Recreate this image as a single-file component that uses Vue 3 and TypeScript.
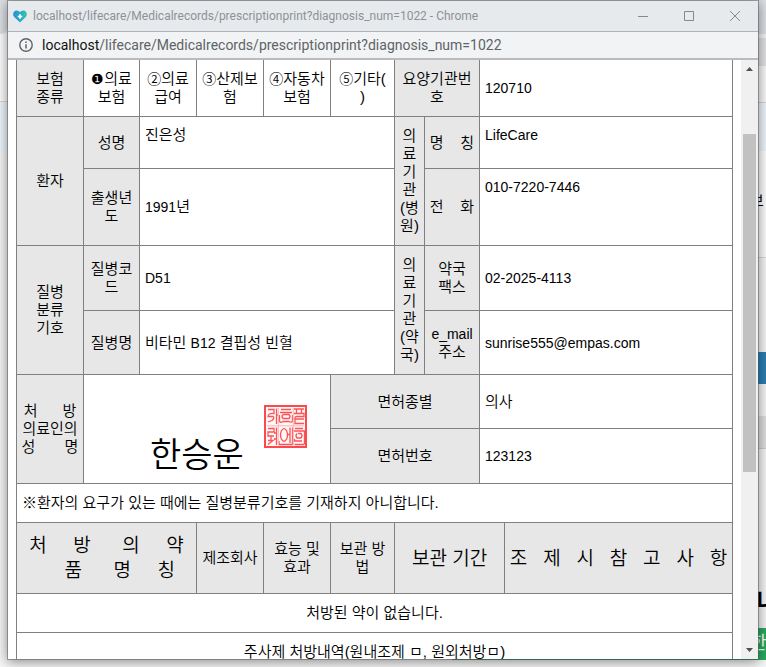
<script setup lang="ts">
interface Insurance {
  mark: string
  first: string
  second: string
}

const host = 'localhost'
const path = '/lifecare/Medicalrecords/prescriptionprint?diagnosis_num=1022'
const columns: string[] = ['c67', 'c56', 'c57', 'c67', 'c67', 'c64', 'c30', 'c55', 'c25', 'rest']
const insurances: Insurance[] = [
  { mark: '❶', first: '의료', second: '보험' },
  { mark: '②', first: '의료', second: '급여' },
  { mark: '③', first: '산제보', second: '험' },
  { mark: '④', first: '자동차', second: '보험' },
  { mark: '⑤', first: '기타(', second: ')' },
]
const hospital: string[] = ['의', '료', '기', '관', '(병', '원)']
const pharmacy: string[] = ['의', '료', '기', '관', '(약', '국)']

// Non-breaking gap used to spread the letters of a form label.
const gap = (n: number): string => '\u00a0'.repeat(n)
const drugName: string[] = [
  '처' + gap(5) + '방' + gap(6) + '의' + gap(5) + '약',
  gap(5) + '품' + gap(6) + '명' + gap(5) + '칭',
]
const notes = '조제시참고사항'.split('').join(gap(3))
</script>

<template>
  <div class="desktop">
    <div class="behind" aria-hidden="true">
      <i class="footer"></i>
      <div class="strip left">
        <i class="tab"></i><i class="bar"></i><i class="band"></i><i class="fill"></i>
      </div>
      <div class="strip right">
        <i class="tab"></i><i class="light"></i><i class="mid"></i><i class="pale"></i>
        <i class="band"></i><i class="card"><b>보</b></i><i class="space"></i>
        <i class="blue"></i><i class="space2"></i><i class="grey"></i>
        <i class="fill"><b>니</b></i><i class="green"><b>한</b></i><i class="foot"></i>
      </div>
    </div>

    <main class="window">
      <header class="title">
        <svg class="heart" viewBox="0 0 14 13" aria-hidden="true">
          <defs>
            <linearGradient id="heartFill" x1="0" y1="0" x2="1" y2="0">
              <stop offset="0" stop-color="#2f8fd0" />
              <stop offset=".5" stop-color="#27a9c9" />
              <stop offset="1" stop-color="#39c6a2" />
            </linearGradient>
          </defs>
          <path d="M7 12.6 1.2 7C-.6 5-.1 1.700 2.400.7 4.200 0 6 .8 7 2.300 8 .8 9.800 0 11.600.7 14.100 1.700 14.600 5 12.800 7Z" fill="url(#heartFill)" />
          <path d="M7 4.200V8.800M4.700 6.500H9.300" stroke="#fff" stroke-width="1.700" />
        </svg>
        <h1>{{ host + path }} - Chrome</h1>
        <nav class="controls">
          <button type="button" aria-label="최소화">
            <svg viewBox="0 0 10 10"><path d="M0 5.500H10" /></svg>
          </button>
          <button type="button" aria-label="최대화">
            <svg viewBox="0 0 10 10"><path d="M.5.5H9.500V9.500H.5Z" /></svg>
          </button>
          <button type="button" aria-label="닫기">
            <svg viewBox="0 0 10 10"><path d="M0 0 10 10M10 0 0 10" /></svg>
          </button>
        </nav>
      </header>

      <div class="address">
        <svg class="info" viewBox="0 0 14 14" aria-hidden="true">
          <circle cx="7" cy="7" r="6.200" fill="none" stroke="#5f6368" stroke-width="1.400" />
          <path d="M7 6.200V10.500M7 3.500V5" stroke="#5f6368" stroke-width="1.500" />
        </svg>
        <span class="url"><span class="host">{{ host }}</span>{{ path }}</span>
      </div>

      <div class="viewport">
        <div class="page">
          <table>
            <colgroup>
              <col v-for="(c, i) in columns" :key="i" :class="c" />
            </colgroup>
            <tbody>
              <tr class="h57">
                <th>보험<br />종류</th>
                <td v-for="(item, i) in insurances" :key="item.mark" class="center">
                  <span :class="i === 0 ? 'mark-on' : 'mark'">{{ item.mark }}</span>{{ item.first }}<br />{{ item.second }}
                </td>
                <th colspan="2">요양기관번<br />호</th>
                <td colspan="2" class="latin">120710</td>
              </tr>
              <tr class="h52">
                <th rowspan="2">환자</th>
                <th>성명</th>
                <td colspan="4" class="top">진은성</td>
                <th rowspan="2" class="tall"><span v-for="s in hospital" :key="s">{{ s }}</span></th>
                <th>명{{ gap(4) }}칭</th>
                <td colspan="2" class="latin top">LifeCare</td>
              </tr>
              <tr class="h77">
                <th>출생년<br />도</th>
                <td colspan="4"><span class="latin">1991</span>년</td>
                <th>전{{ gap(4) }}화</th>
                <td colspan="2" class="latin top">010-7220-7446</td>
              </tr>
              <tr class="h65">
                <th rowspan="2">질병<br />분류<br />기호</th>
                <th>질병코<br />드</th>
                <td colspan="4" class="latin">D51</td>
                <th rowspan="2" class="tall"><span v-for="s in pharmacy" :key="s">{{ s }}</span></th>
                <th>약국<br />팩스</th>
                <td colspan="2" class="latin">02-2025-4113</td>
              </tr>
              <tr class="h64">
                <th>질병명</th>
                <td colspan="4">비타민 <span class="latin">B12</span> 결핍성 빈혈</td>
                <th><span class="latin">e_mail</span><br />주소</th>
                <td colspan="2" class="latin">sunrise555@empas.com</td>
              </tr>
              <tr class="h54">
                <th rowspan="2">처{{ gap(6) }}방<br />의료인의<br />성{{ gap(7) }}명</th>
                <td colspan="4" rowspan="2">
                  <div class="sign">
                    <span>한승운</span>
                    <svg class="stamp" viewBox="0 0 43 43" role="img" aria-label="도장">
                      <rect x="1" y="1" width="41" height="41" fill="#fff6f6" stroke="#fb4a4e" stroke-width="2" />
                      <g fill="none" stroke="#fb5458" stroke-width="1.300">
                        <path d="M4 4.500H10V8.500Q4 8 4 11.500H9Q11 13 8 15.500L4 17M12.500 3.500V19M12.500 10H14" />
                        <path d="M17 4.500H27M16 7.500H28M19 9.500H25Q27 11.500 25 13.500H19Q17 11.500 19 9.500M15.500 10V16Q16 18.500 19 16.500H25Q28.500 18.500 28.500 15V10" />
                        <path d="M30 4H40M32.500 4V8M37.500 4V8M30 8.500H40V11.500H33Q30.500 11.500 31 14H40M31 14V18.500H40" />
                        <path d="M4 23.500H10V27H4V31H10M7 31V35M4 35.500H9L4 39.500M12.500 22.500V40M10 28H12.500M10 34H12.500" />
                        <path d="M20 23.500Q16.500 25 16.500 30T20 36.500Q23.500 35 23.500 30T20 23.500M26 22.500V38M23.500 29.500H26M15 36V39.500H28.500V22.500" />
                        <path d="M31 23.500H39M30 26H40.500V39.500M34 28.500H37Q39 30.500 37 33H33Q31 30.500 33 28.500M30.500 34V36H38M30.500 39.500H40" />
                      </g>
                      <path d="M14.300 3V40M29.300 3V40M3 20.800H40" stroke="#ffb3b5" stroke-width="1" />
                    </svg>
                  </div>
                </td>
                <th colspan="3">면허종별</th>
                <td colspan="2">의사</td>
              </tr>
              <tr class="h55">
                <th colspan="3">면허번호</th>
                <td colspan="2" class="latin">123123</td>
              </tr>
              <tr class="h39">
                <td colspan="10">※환자의 요구가 있는 때에는 질병분류기호를 기재하지 아니합니다.</td>
              </tr>
              <tr class="h71">
                <th colspan="3" class="big">{{ drugName[0] }}<br />{{ drugName[1] }}</th>
                <th>제조회사</th>
                <th>효능 및<br />효과</th>
                <th>보관 방<br />법</th>
                <th colspan="3" class="big">보관 기간</th>
                <th class="big">{{ notes }}</th>
              </tr>
              <tr class="h39">
                <td colspan="10" class="center">처방된 약이 없습니다.</td>
              </tr>
              <tr class="h39">
                <td colspan="10" class="center">주사제 처방내역(원내조제 ㅁ, 원외처방ㅁ)</td>
              </tr>
            </tbody>
          </table>
        </div>
        <div class="scrollbar" aria-hidden="true">
          <svg viewBox="0 0 17 17"><path d="M5 11 8.500 7 12 11Z" /></svg>
          <i class="before"></i><i class="thumb"></i><i class="after"></i>
          <svg viewBox="0 0 17 17"><path d="M5 6 8.500 10 12 6Z" /></svg>
        </div>
      </div>
    </main>
  </div>
</template>

<style>
body {
  overflow: hidden;
}
</style>

<style scoped>
* {
  box-sizing: border-box;
}
.desktop {
  position: relative;
  display: flex;
  height: 100vh;
  padding: 0 7px 7px;
  background: #f8f8f8;
  font-family: "Liberation Sans", "Noto Sans CJK KR", sans-serif;
}
.behind {
  position: absolute;
  inset: 0;
  display: flex;
  justify-content: space-between;
  overflow: hidden;
}
.footer {
  position: absolute;
  right: 0;
  bottom: 7px;
  left: 59%;
  height: 32px;
  background: #27ae60;
}
.strip {
  position: relative;
  display: flex;
  flex-direction: column;
  width: 8px;
}
.strip i {
  flex: none;
  display: block;
  overflow: hidden;
  font-style: normal;
}
.strip .tab {
  height: 34px;
  background: #dee1e6;
}
.left .tab {
  border-bottom-right-radius: 8px;
}
.strip .bar {
  height: 68px;
  background: #fff;
  border-bottom: 1px solid #d5dce2;
}
.strip .band {
  height: 49px;
  background: #f1f8fd;
}
.strip .fill {
  flex: 1;
}
.strip .light {
  height: 4px;
  background: #f6f6f8;
}
.strip .mid {
  height: 28px;
  background: #e4e4e7;
}
.strip .pale {
  height: 37px;
  background: #fbfbfc;
  border-bottom: 1px solid #d2d7dc;
}
.right .band {
  height: 48px;
}
.strip .card {
  height: 107px;
  padding-top: 40px;
  background: #fff;
  border-bottom: 1px solid #ddd;
}
.card b {
  display: block;
  margin-left: -8px;
  font-size: 15px;
  font-weight: 400;
  line-height: 20px;
}
.strip .space {
  height: 94px;
}
.strip .blue {
  height: 32px;
  background: #2980b9;
}
.strip .space2 {
  height: 32px;
}
.strip .grey {
  height: 33px;
  background: #e2e2e2;
  border-bottom: 1px solid #cfcfcf;
}
.right .fill {
  display: flex;
  align-items: flex-end;
}
.right .fill b {
  margin-left: -2px;
  padding-bottom: 10px;
  font-size: 24px;
  line-height: 32px;
}
.strip .green {
  height: 32px;
  background: #27ae60;
  color: #fff;
}
.green b {
  display: block;
  margin-left: -8px;
  font-size: 18px;
  font-weight: 400;
  line-height: 30px;
}
.strip .foot {
  height: 7px;
}
.window {
  position: relative;
  display: flex;
  flex-direction: column;
  flex: 1;
  min-width: 0;
  border: 1px solid rgba(82, 84, 88, 0.5);
  background: #fff;
  background-clip: padding-box;
  box-shadow: 0 2px 12px rgba(0, 0, 0, 0.45);
}
.title {
  flex: none;
  display: flex;
  align-items: center;
  height: 31px;
  padding-left: 5px;
  background: #e7eaed;
  border-bottom: 1px solid #b0b3b7;
}
.heart {
  flex: none;
  width: 14px;
  height: 13px;
}
.title h1 {
  flex: 1;
  min-width: 0;
  margin: 0 0 0 6px;
  overflow: hidden;
  color: #8d9196;
  font: 400 12px/20px Roboto, sans-serif;
  white-space: nowrap;
}
.controls {
  display: flex;
}
.controls button {
  display: flex;
  align-items: center;
  justify-content: center;
  width: 46px;
  height: 28px;
  padding: 0;
  border: 0;
  background: none;
}
.controls svg {
  width: 10px;
  height: 10px;
  fill: none;
  stroke: #85888c;
}
.address {
  flex: none;
  display: flex;
  align-items: center;
  height: 28px;
  padding-left: 11px;
  gap: 9px;
  background: #f1f3f4;
  border-bottom: 2px solid #b9bbbe;
}
.info {
  flex: none;
  width: 14px;
  height: 14px;
}
.url {
  color: #5f6368;
  font: 400 14px/20px Roboto, sans-serif;
  white-space: nowrap;
}
.host {
  color: #111;
}
.viewport {
  display: flex;
  flex: 1;
  min-height: 0;
  overflow: hidden;
}
.page {
  flex: 1;
  min-width: 0;
  padding: 0 8px;
  overflow: hidden;
}
table {
  width: 100%;
  margin-top: -1px;
  border-collapse: collapse;
  table-layout: fixed;
  color: #000;
  font-size: 15px;
  font-weight: 350;
  line-height: 18px;
}
.c67 {
  width: 67px;
}
.c56 {
  width: 56px;
}
.c57 {
  width: 57px;
}
.c64 {
  width: 64px;
}
.c30 {
  width: 30px;
}
.c55 {
  width: 55px;
}
.c25 {
  width: 25px;
}
.h57 {
  height: 57px;
}
.h52 {
  height: 52px;
}
.h77 {
  height: 77px;
}
.h65 {
  height: 65px;
}
.h64 {
  height: 64px;
}
.h54 {
  height: 54px;
}
.h55 {
  height: 55px;
}
.h39 {
  height: 39px;
}
.h71 {
  height: 71px;
}
th,
td {
  padding: 0 5px;
  border: 1px solid #808080;
  text-align: left;
  vertical-align: middle;
  white-space: nowrap;
}
th {
  padding: 0;
  background: #e7e7e7;
  font-weight: 350;
  text-align: center;
}
.center {
  padding: 0;
  text-align: center;
}
.latin {
  font-size: 14px;
}
.top {
  padding-top: 9px;
  vertical-align: top;
}
.tall span {
  display: block;
}
.mark,
.mark-on {
  font-family: "Noto Sans CJK KR", sans-serif;
  font-size: 14px;
  line-height: 16px;
}
.mark-on {
  font-family: "DejaVu Sans", sans-serif;
}
.big {
  font-size: 19px;
  line-height: 25px;
}
.sign {
  display: flex;
  align-items: flex-end;
  gap: 20px;
  padding: 24px 0 0 61px;
  font-size: 34px;
  line-height: 44px;
}
.stamp {
  width: 43px;
  height: 43px;
  margin-bottom: 29px;
}
.scrollbar {
  flex: none;
  display: flex;
  flex-direction: column;
  width: 17px;
  background: #f0f0f0;
}
.scrollbar svg {
  flex: none;
  height: 17px;
  fill: #505050;
}
.before {
  flex: 57;
}
.thumb {
  flex: 337;
  margin: 0 2px;
  background: #c1c1c1;
}
.after {
  flex: 170;
}
</style>
